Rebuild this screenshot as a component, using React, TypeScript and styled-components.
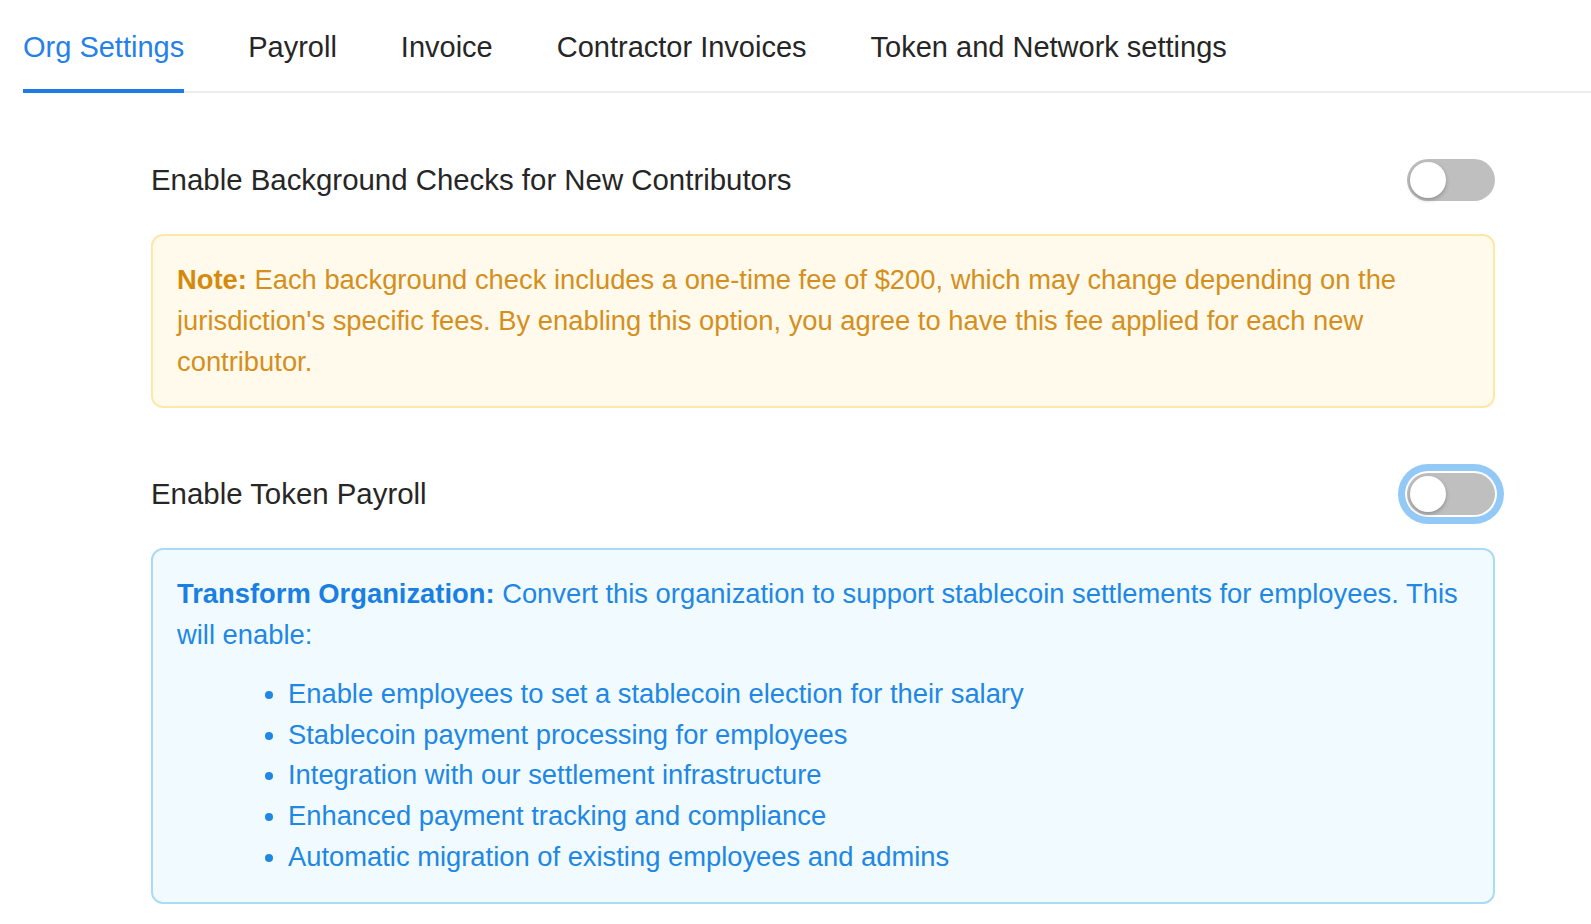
import React, { useState } from 'react'
import styled, { createGlobalStyle } from 'styled-components'

const GlobalStyle = createGlobalStyle`
  html, body {
    margin: 0;
    padding: 0;
    background: #fff;
  }
  body {
    font-family: "Liberation Sans", Arial, sans-serif;
    color: #262626;
  }
`

const Page = styled.main`
  width: 100%;
  min-height: 924px;
  background: #fff;
`

const TabBar = styled.nav`
  display: flex;
  gap: 64px;
  margin-left: 23px;
  border-bottom: 2px solid #ececec;
`

const Tab = styled.button<{ $active?: boolean }>`
  font-family: inherit;
  font-size: 29px;
  line-height: 35px;
  padding: 30px 0 24px;
  margin-bottom: -2px;
  background: none;
  border: none;
  border-bottom: 4px solid ${p => (p.$active ? '#1f7ae6' : 'transparent')};
  color: ${p => (p.$active ? '#2580ea' : '#262626')};
  cursor: pointer;
  white-space: nowrap;
`

const Content = styled.div`
  width: 1344px;
  margin-left: 151px;
  padding-top: 66px;
  display: flex;
  flex-direction: column;
  gap: 65px;
`

const Section = styled.section`
  display: flex;
  flex-direction: column;
  gap: 33px;
`

const SettingRow = styled.div`
  display: flex;
  align-items: center;
  justify-content: space-between;
  height: 42px;
`

const SettingTitle = styled.h3`
  margin: 0;
  font-size: 29.4px;
  font-weight: 400;
  color: #262626;
`

const Track = styled.button<{ $focused?: boolean }>`
  position: relative;
  width: 88px;
  height: 42px;
  padding: 0;
  border: none;
  border-radius: 21px;
  background: #bfbfbf;
  cursor: pointer;
  box-shadow: ${p => (p.$focused ? '0 0 0 2px #fff, 0 0 0 9px #93c9f7' : 'none')};
`

const Thumb = styled.span<{ $on?: boolean }>`
  position: absolute;
  top: 3px;
  left: ${p => (p.$on ? '49px' : '3px')};
  width: 36px;
  height: 36px;
  border-radius: 50%;
  background: #fff;
  box-shadow: 0 2px 4px rgba(0, 0, 0, 0.25);
`

const Callout = styled.div<{ $tone: 'warning' | 'info' }>`
  border: 2px solid ${p => (p.$tone === 'warning' ? '#fde8a6' : '#a9daf6')};
  background: ${p => (p.$tone === 'warning' ? '#fffaeb' : '#f1fbff')};
  color: ${p => (p.$tone === 'warning' ? '#d58f1d' : '#2187e5')};
  border-radius: 12px;
  padding: 23px 14px 24px 24px;
  font-size: 27.35px;
  line-height: 41px;

  p {
    margin: 0;
  }
  strong {
    font-weight: 700;
    color: ${p => (p.$tone === 'warning' ? '#d68a0c' : '#1a7fe2')};
  }
`

const FeatureList = styled.ul`
  margin: 19px 0 0;
  padding-left: 111px;
  line-height: 40.7px;
`

function Toggle({ focused }: { focused?: boolean }) {
  const [on, setOn] = useState(false)
  return (
    <Track $focused={focused} onClick={() => setOn(!on)} aria-pressed={on}>
      <Thumb $on={on} />
    </Track>
  )
}

const tabs = ['Org Settings', 'Payroll', 'Invoice', 'Contractor Invoices', 'Token and Network settings']

const features = [
  'Enable employees to set a stablecoin election for their salary',
  'Stablecoin payment processing for employees',
  'Integration with our settlement infrastructure',
  'Enhanced payment tracking and compliance',
  'Automatic migration of existing employees and admins',
]

export default function App() {
  return (
    <>
      <GlobalStyle />
      <Page>
        <TabBar>
          {tabs.map((t, i) => (
            <Tab key={t} $active={i === 0}>{t}</Tab>
          ))}
        </TabBar>
        <Content>
          <Section>
            <SettingRow>
              <SettingTitle>Enable Background Checks for New Contributors</SettingTitle>
              <Toggle />
            </SettingRow>
            <Callout $tone='warning'>
              <p>
                <strong>Note:</strong> Each background check includes a one-time fee of $200, which may change depending on the jurisdiction's specific fees. By enabling this option, you agree to have this fee applied for each new contributor.
              </p>
            </Callout>
          </Section>
          <Section>
            <SettingRow>
              <SettingTitle>Enable Token Payroll</SettingTitle>
              <Toggle focused />
            </SettingRow>
            <Callout $tone='info'>
              <p>
                <strong>Transform Organization:</strong> Convert this organization to support stablecoin settlements for employees. This will enable:
              </p>
              <FeatureList>
                {features.map(f => (
                  <li key={f}>{f}</li>
                ))}
              </FeatureList>
            </Callout>
          </Section>
        </Content>
      </Page>
    </>
  )
}
